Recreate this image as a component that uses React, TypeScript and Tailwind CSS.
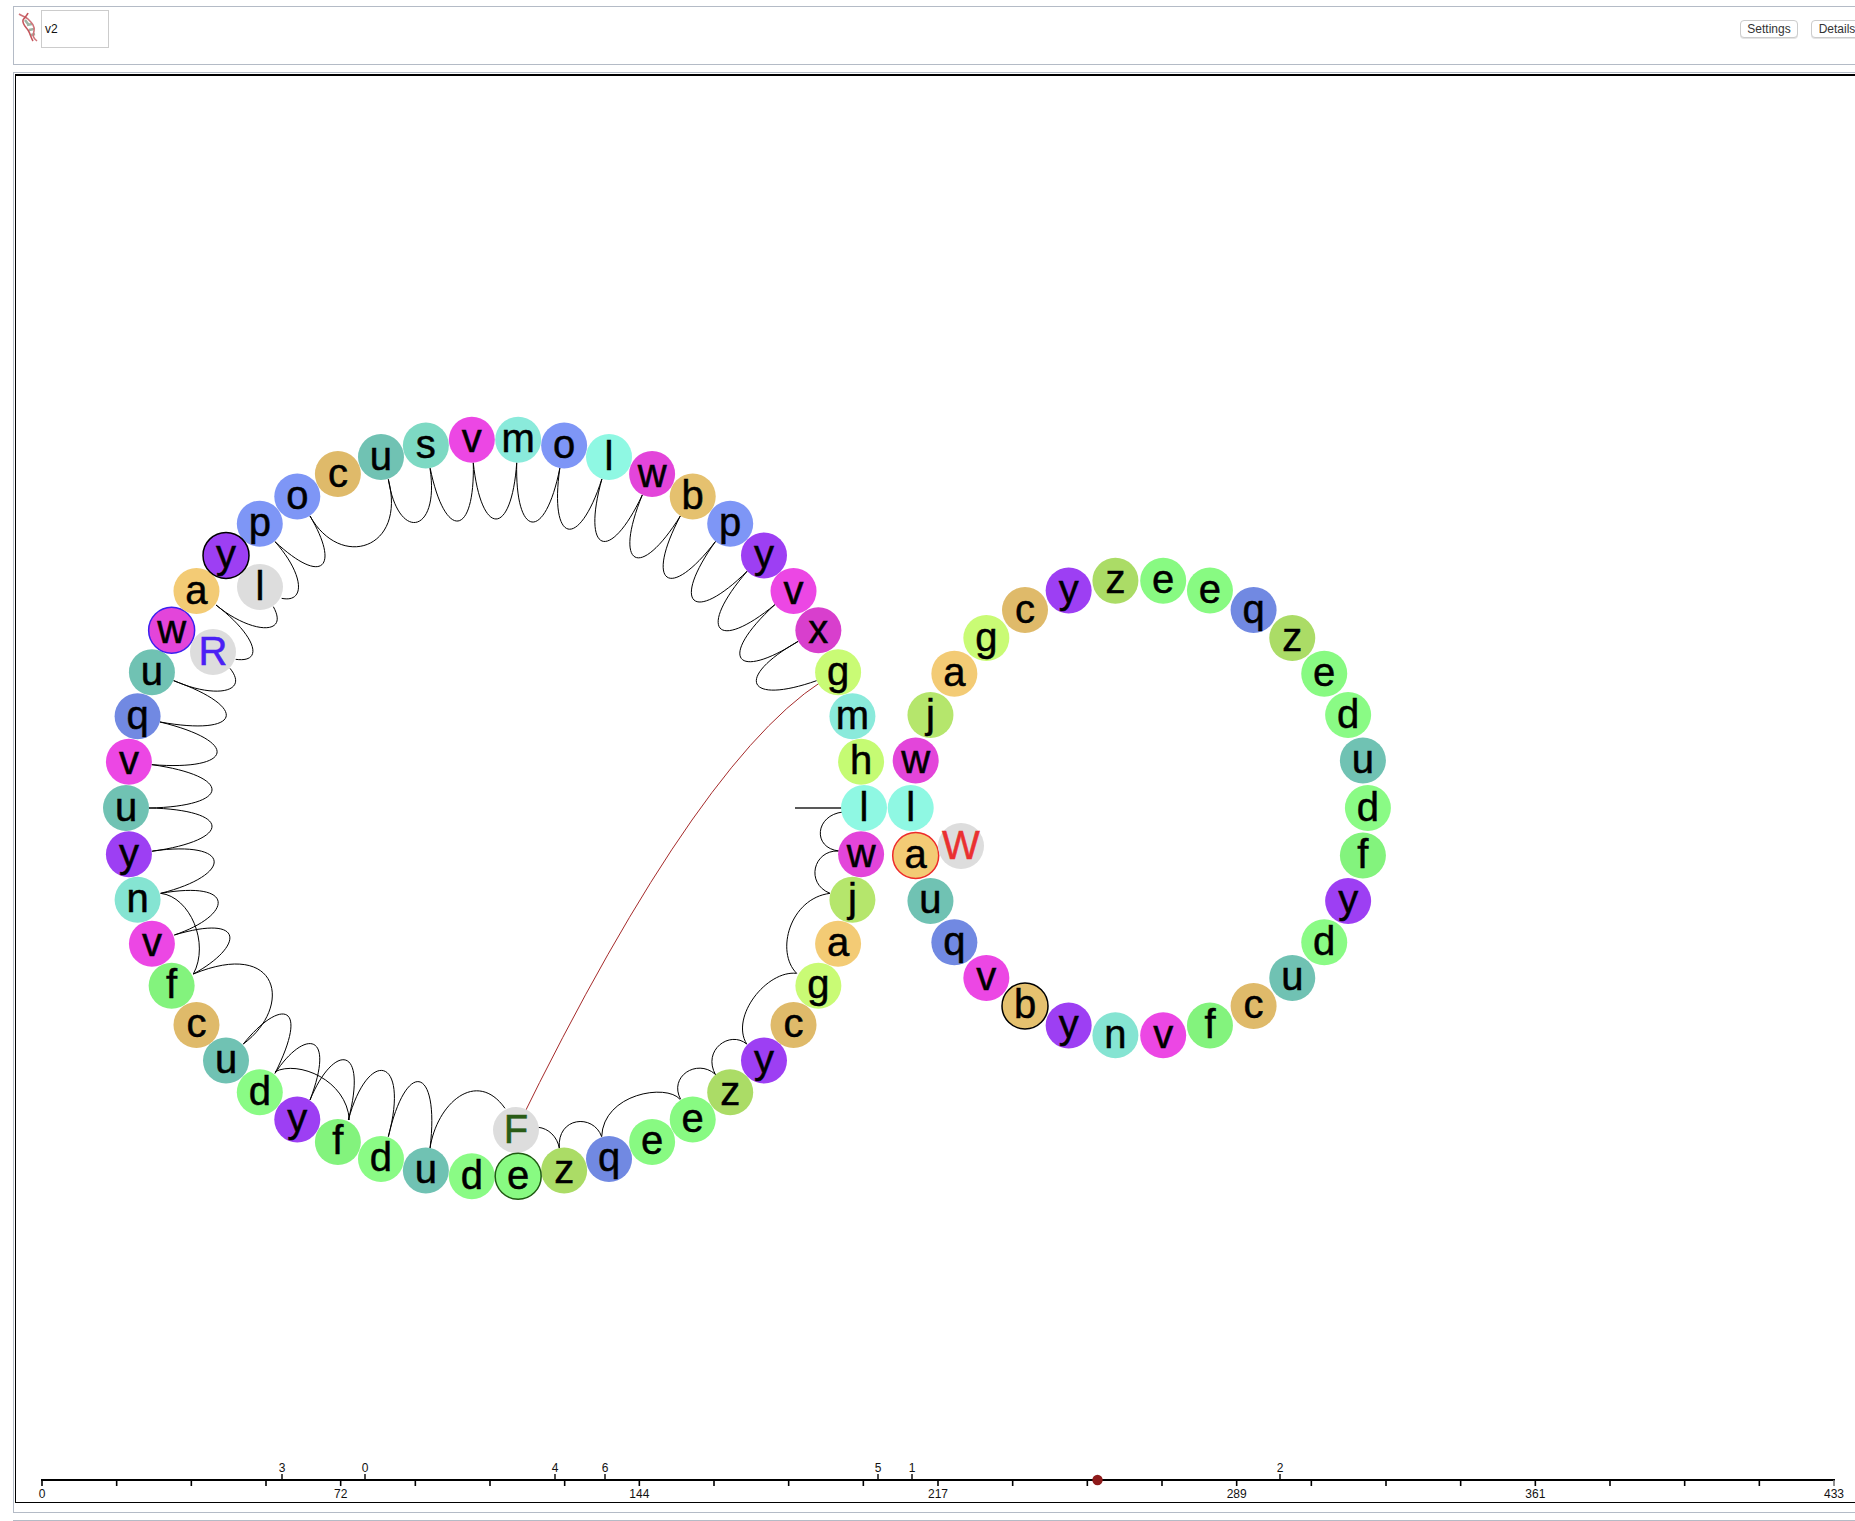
type Pt = [number, number];

const colors: Record<string, string> = {
  a: '#f3cb75', b: '#e5c16f', c: '#dfba6a', d: '#8afb85', e: '#88fa82', f: '#83f37d', g: '#c9fb75',
  h: '#c5fb73', j: '#b5e66c', l: '#8ff8e3', m: '#8aeadb', n: '#85e4d2', o: '#7e96f6', p: '#7e96f6',
  q: '#7189e2', s: '#7dd9c3', u: '#70c2b3', v: '#ec47e4', w: '#e345da', x: '#d83fcd', y: '#9d3ff3',
  z: '#abdc66',
};

const leftSeq = 'lwjagcyzeeqzedudfyducfvnyuvquwaypocusvmolwbpyvxgmh';
const rightSeq = 'lauqvbynvfcudyfdudezqeezycgajw';

const L = (k: number): Pt => {
  const t = (k * 7.2 * Math.PI) / 180;
  return [495 + 369 * Math.cos(t), 808 + 369 * Math.sin(t)];
};
const R = (i: number): Pt => {
  const t = ((180 - i * 12) * Math.PI) / 180;
  return [1139.3 + 228.6 * Math.cos(t), 808 + 228.6 * Math.sin(t)];
};
// point on a left ring node's edge, facing the ring's middle
const E = (k: number): Pt => {
  const t = (k * 7.2 * Math.PI) / 180;
  return [495 + 346 * Math.cos(t), 808 + 346 * Math.sin(t)];
};

const grayL: Pt = [260, 587];
const grayR: Pt = [213, 652];
const grayF: Pt = [516, 1130];
const grayW: Pt = [961, 846];

// leaf shaped loop between two neighbours, through a tip point
const leaf = (j: number, k: number, tip: Pt, s = 0.35) => {
  const a = E(j);
  const b = E(k);
  const cx = (8 * tip[0] - a[0] - b[0]) / 6;
  const cy = (8 * tip[1] - a[1] - b[1]) / 6;
  const wx = (a[0] - b[0]) * s;
  const wy = (a[1] - b[1]) * s;
  return `M${a[0]},${a[1]} C${cx + wx},${cy + wy} ${cx - wx},${cy - wy} ${b[0]},${b[1]}`;
};

// traced at 3x from an origin: x0,y0, c1x,c1y, c2x,c2y, x3,y3
const traced = (ox: number, oy: number, rows: number[][]) =>
  rows.map((r) => {
    const p = r.map((v, i) => v / 3 + (i % 2 === 0 ? ox : oy));
    return `M${p[0]},${p[1]} C${p[2]},${p[3]} ${p[4]},${p[5]} ${p[6]},${p[7]}`;
  });

const arcs: string[] = [
  // upper arc of the ring
  ...traced(90, 400, [
    [252, 842, 370, 895, 480, 880, 420, 805],
    [437, 778, 530, 790, 490, 700, 378, 615],
    [378, 615, 480, 700, 600, 710, 550, 620],
    [575, 595, 650, 610, 640, 520, 555, 425],
    [555, 425, 700, 560, 750, 500, 660, 348],
    [660, 348, 750, 510, 950, 450, 895, 238],
    [895, 238, 925, 430, 1050, 400, 1020, 205],
  ]),
  leaf(36, 37, [458, 521]),
  leaf(37, 38, [496, 519]),
  leaf(38, 39, [532, 522]),
  leaf(39, 40, [568, 529]),
  leaf(40, 41, [602, 541]),
  leaf(41, 42, [635, 557]),
  leaf(42, 43, [667, 577]),
  leaf(43, 44, [694, 600]),
  leaf(44, 45, [720, 628]),
  leaf(45, 46, [741, 658]),
  leaf(46, 47, [757, 684]),
  leaf(24, 25, [212, 826]),
  leaf(25, 26, [212, 790]),
  leaf(26, 27, [217, 753]),
  leaf(27, 28, [226, 717]),
  // lower left
  ...traced(90, 820, [
    [1020, 985, 1040, 850, 1160, 745, 1245, 865],
    [1020, 985, 1050, 740, 950, 710, 895, 950],
    [895, 950, 960, 710, 835, 680, 775, 900],
    [775, 900, 835, 670, 730, 670, 660, 840],
    [660, 840, 740, 630, 640, 630, 555, 760],
    [555, 755, 625, 720, 770, 780, 778, 900],
    [555, 760, 665, 540, 565, 540, 460, 672],
    [460, 672, 610, 560, 570, 355, 310, 462],
    [310, 462, 460, 380, 470, 280, 253, 345],
    [253, 345, 430, 285, 440, 180, 212, 220],
    [212, 220, 300, 230, 360, 370, 310, 462],
    [212, 220, 430, 165, 430, 60, 187, 93],
  ]),
  // lower right
  ...traced(480, 820, [
    [1075, 93, 1000, 90, 975, 190, 1050, 220],
    [1050, 220, 930, 235, 885, 395, 950, 460],
    [950, 460, 860, 450, 750, 590, 800, 672],
    [800, 672, 750, 630, 665, 690, 707, 765],
    [705, 762, 650, 715, 565, 770, 602, 838],
    [600, 838, 560, 790, 370, 820, 365, 950],
    [365, 950, 340, 880, 230, 890, 238, 985],
    [238, 985, 232, 950, 205, 925, 175, 922],
  ]),
  'M843,812 C815,815 812,848 839,851',
];

const highlight: Record<string, string> = {
  R1: '#ee2b2b',
  R5: '#000000',
  L29: '#3a1ff0',
};

function Node({ p, ch, fill, ring, ink = '#000000' }: { p: Pt; ch: string; fill: string; ring?: string; ink?: string }) {
  return (
    <g>
      <circle cx={p[0]} cy={p[1]} r={23} fill={fill} stroke={ring ?? 'none'} strokeWidth={ring ? 1.5 : 0} />
      <text x={p[0]} y={p[1] + 12.5} textAnchor="middle" fill={ink} stroke={ink} strokeWidth={0.5} className="text-[40px]">
        {ch}
      </text>
    </g>
  );
}

const RULER_X = 42;
const RULER_END = 1834;
const RULER_Y = 1480;
const step = (RULER_END - RULER_X) / 24;
const majorLabels = ['0', '72', '144', '217', '289', '361', '433'];
const marks: [string, number][] = [
  ['3', 282], ['0', 365], ['4', 555], ['6', 605], ['5', 878], ['1', 912], ['2', 1280],
];

function Ruler() {
  return (
    <g>
      <line x1={RULER_X - 1} x2={RULER_END + 1} y1={RULER_Y} y2={RULER_Y} stroke="#000" strokeWidth={2} />
      {Array.from({ length: 25 }, (_, i) => (
        <line key={i} x1={RULER_X + i * step} x2={RULER_X + i * step} y1={RULER_Y} y2={RULER_Y + 6} stroke={i === 24 ? '#777' : '#000'} strokeWidth={1.6} />
      ))}
      {majorLabels.map((t, i) => (
        <text key={t} x={RULER_X + i * 4 * step} y={RULER_Y + 18} textAnchor="middle" className="text-[12px]" fill="#111">
          {t}
        </text>
      ))}
      {marks.map(([t, x]) => (
        <g key={t}>
          <line x1={x} x2={x} y1={RULER_Y - 6} y2={RULER_Y} stroke="#000" strokeWidth={1.4} />
          <text x={x} y={RULER_Y - 8} textAnchor="middle" className="text-[12px]" fill="#111">
            {t}
          </text>
        </g>
      ))}
      <circle cx={1097.5} cy={RULER_Y} r={5.2} fill="#8e1a1a" />
    </g>
  );
}

function DnaIcon() {
  return (
    <svg width="24" height="32" viewBox="0 0 24 32" className="shrink-0 blur-[0.5px]">
      <path d="M8 9 L11 13 M10 14 L15 13 M12 19 L17 18 M14 24 L18 23" stroke="#9fb3a4" strokeWidth="2.5" />
      <path d="M2 3 C5 5 9 6 11 8 C15 12 18 15 17 20 C16 24 15 26 20 30" fill="none" stroke="#cf7278" strokeWidth="1.6" />
      <path d="M11 2 C10 5 7 7 6 9 C5 13 9 16 11 19 C13 22 14 27 16 30" fill="none" stroke="#c4565c" strokeWidth="1.6" />
    </svg>
  );
}

export default function App() {
  return (
    <div className="h-[1521px] w-full overflow-hidden bg-white pt-[6px] pl-[13px] font-['Liberation_Sans',Arial,sans-serif]">
      {/* Header */}
      <div className="flex h-[59px] w-[1868px] items-start justify-between border border-[#b4bbc6] pr-[17px]">
        <div className="flex items-start pt-[3px] pl-[3px]">
          <div className="pt-[1px]">
            <DnaIcon />
          </div>
          <div className="flex h-[38px] w-[68px] items-center border border-[#cccccc] pl-[3px] text-[12px] text-[#111]">v2</div>
        </div>
        <div className="flex gap-[13px] pt-[13px]">
          <button className="h-[18px] w-[58px] rounded-[4px] border border-[#cccccc] bg-white text-[12px] leading-none text-[#333] shadow-[0_1px_0_#e4e4e4]">Settings</button>
          <button className="h-[18px] w-[52px] rounded-[4px] border border-[#cccccc] bg-white text-[12px] leading-none text-[#333] shadow-[0_1px_0_#e4e4e4]">Details</button>
        </div>
      </div>

      {/* Structure view */}
      <div className="mt-[7px] w-[1880px] border border-[#b4bbc6] px-[1px] pt-[1px] pb-[9px]">
        <div className="border border-t-2 border-black">
          <svg viewBox="16 76 1876 1426" className="h-[1426px] w-[1876px]">
            {arcs.map((d, i) => (
              <path key={i} d={d} fill="none" stroke="#000" strokeWidth={1} />
            ))}
            <path d="M795,808 L864,808" stroke="#222" strokeWidth={1.4} />
            <path d="M516,1130 Q707,739 838,672" fill="none" stroke="#a52a2a" strokeWidth={1} />

            {Array.from(rightSeq).map((ch, i) => (
              <Node key={i} p={R(i)} ch={ch} fill={colors[ch]} ring={highlight[`R${i}`]} />
            ))}
            {Array.from(leftSeq).map((ch, k) => (
              <Node key={k} p={L(k)} ch={ch} fill={colors[ch]} ring={highlight[`L${k}`]} />
            ))}
            <Node p={grayL} ch="l" fill="#dddddd" />
            <Node p={grayR} ch="R" fill="#dddddd" ink="#4a20f5" />
            <Node p={grayF} ch="F" fill="#dddddd" ink="#2a5c17" />
            <Node p={grayW} ch="W" fill="#dddddd" ink="#ea3030" />
            <Node p={L(31)} ch="y" fill={colors.y} ring="#000000" />
            <Node p={L(12)} ch="e" fill={colors.e} ring="#1f5a12" />
            <Ruler />
          </svg>
        </div>
      </div>
      <div className="mt-[7px] h-[40px] w-[1880px] border border-[#b4bbc6]" />
    </div>
  );
}
